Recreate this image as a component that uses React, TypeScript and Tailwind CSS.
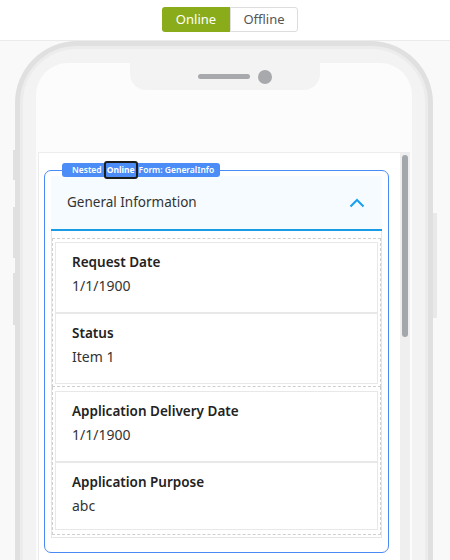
import type { ReactNode } from 'react';

type Field = { label: string; value: string; last?: boolean };

const groups: Field[][] = [
  [
    { label: 'Request Date', value: '1/1/1900' },
    { label: 'Status', value: 'Item 1' },
  ],
  [
    { label: 'Application Delivery Date', value: '1/1/1900' },
    { label: 'Application Purpose', value: 'abc', last: true },
  ],
];

function Cell({ label, value, last }: Field) {
  return (
    <div className={`border border-[#e8e8e8] px-[16px] pt-[9px] ${last ? 'pb-[13px]' : 'pb-[16px]'}`}>
      <div className="text-[13.5px] leading-[20px] font-semibold text-[#222]">{label}</div>
      <div className="mt-[4px] text-[14px] leading-[20px] text-[#333]">{value}</div>
    </div>
  );
}

function DashedGroup({ children, first }: { children: ReactNode; first?: boolean }) {
  return (
    <div
      className={`border border-dashed border-[#cfcfcf] px-[2px] ${
        first ? 'pt-[3px] pb-[2px]' : 'border-t-0 pt-[4px] pb-[4px]'
      }`}
    >
      {children}
    </div>
  );
}

function FormGroup() {
  return (
    <div className="relative mt-[17px] ml-[5px] mr-[11px] rounded-[7px] border border-[#4a8af4] px-[6px] pt-[5px] pb-[14px]">
      {/* legend pill */}
      <div className="absolute -top-[8px] left-[17px] flex h-[14px] items-center whitespace-nowrap rounded-[3px] bg-[#4b8cf6] pl-[10px] pr-[6px] text-[8.5px] font-semibold leading-none text-white">
        <span>Nested</span>
        <span className="-my-[3px] ml-[2px] rounded-[3px] border-2 border-[#1d1d1d] px-px py-[3px] font-bold">Online</span>
        <span className="ml-[1px]">Form: GeneralInfo</span>
      </div>

      <div className="flex h-[55px] items-center justify-between border-b-2 border-[#1a9be6] bg-[#f5fbff] pl-[16px] pr-[17px]">
        <span className="text-[13.5px] text-[#333]">General Information</span>
        <svg width="16" height="10" viewBox="0 0 16 10" fill="none">
          <polyline points="1.5,8.5 8,2 14.5,8.5" stroke="#1a9ff0" strokeWidth="2" />
        </svg>
      </div>

      <div className="border-x border-b border-[#e6e6e6] pt-[7px] pb-[2px]">
        {groups.map((g, i) => (
          <DashedGroup key={i} first={i === 0}>
            {g.map(f => (
              <Cell key={f.label} {...f} />
            ))}
          </DashedGroup>
        ))}
      </div>
    </div>
  );
}

function Phone() {
  return (
    <div className="relative ml-[15px] w-[418px]">
      {/* side buttons */}
      <div className="absolute -left-[2px] top-[109px] h-[30px] w-[2px] bg-[#e0e0e0]" />
      <div className="absolute -left-[2px] top-[166px] h-[51px] w-[2px] bg-[#e0e0e0]" />
      <div className="absolute -left-[2px] top-[232px] h-[52px] w-[2px] bg-[#e0e0e0]" />
      <div className="absolute -right-[4px] top-[172px] h-[105px] w-[4px] bg-[#e9e9e9]" />

      <div className="rounded-[62px] bg-[#e0e0e0] p-[5px]">
        <div className="rounded-[57px] border-[3px] border-[#ececec] bg-[#f3f3f3] px-[13px] pt-[14px]">
          <div className="relative h-[560px] rounded-t-[32px] bg-[#fcfcfc] pt-[89px]">
            {/* notch */}
            <div className="absolute left-[94px] top-0 flex h-[27px] w-[190px] items-center justify-center gap-[8px] rounded-b-[16px] bg-[#f3f3f3] pl-[19px]">
              <div className="h-[5px] w-[52px] rounded-full bg-[#a7a9ac]" />
              <div className="h-[14px] w-[14px] rounded-full bg-[#a7a9ac]" />
            </div>

            <div className="mx-[2px] flex h-full border-l border-t border-[#ececec] bg-white">
              <div className="flex-1">
                <FormGroup />
              </div>
              <div className="w-[10px] bg-[#efefef] pt-[2px]">
                <div className="mx-auto h-[182px] w-[6px] rounded-full bg-[#a3a8ad]" />
              </div>
            </div>
          </div>
        </div>
      </div>
    </div>
  );
}

export default function App() {
  return (
    <div
      className="h-[560px] w-[450px] overflow-hidden bg-[#f9f9f9]"
      style={{ fontFamily: '"Noto Sans", "Open Sans", sans-serif' }}
    >
      <div className="flex h-[41px] items-start justify-center border-b border-[#ebebeb] bg-white pt-[7px] pl-[10px]">
        <div className="flex h-[25px] text-[13px]">
          <button className="w-[68px] rounded-l-[3px] bg-[#8aac1a] text-white">Online</button>
          <button className="w-[68px] rounded-r-[3px] border border-[#dddddd] bg-white text-[#555]">Offline</button>
        </div>
      </div>
      <Phone />
    </div>
  );
}
